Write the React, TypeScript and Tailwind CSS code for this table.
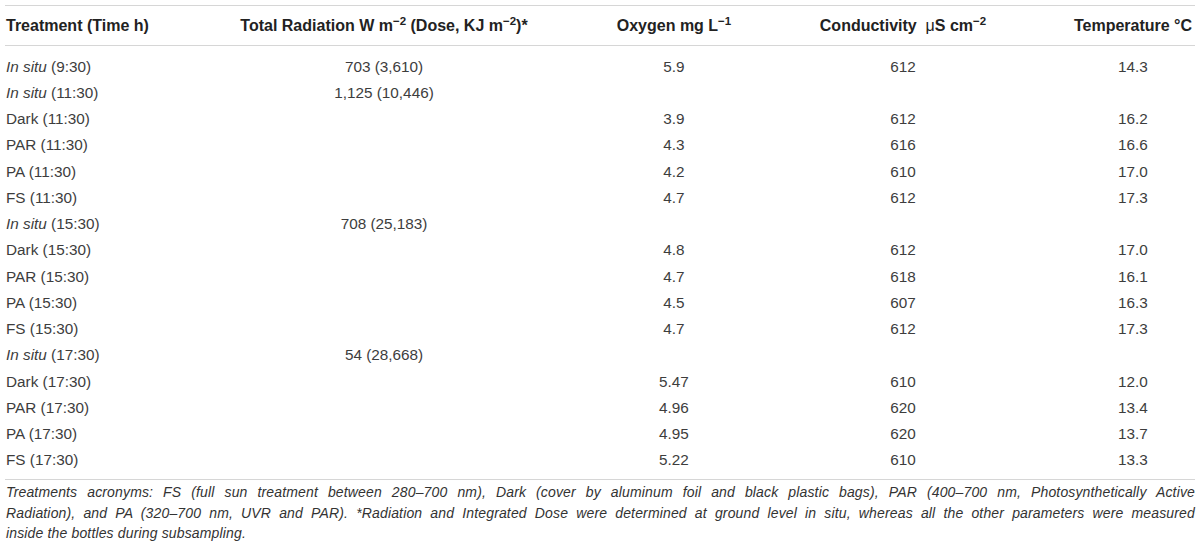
const rows: { label: string; italic?: boolean; time: string; rad?: string; o2?: string; cond?: string; temp?: string }[] = [
  { label: "In situ", italic: true, time: "(9:30)", rad: "703 (3,610)", o2: "5.9", cond: "612", temp: "14.3" },
  { label: "In situ", italic: true, time: "(11:30)", rad: "1,125 (10,446)" },
  { label: "Dark", time: "(11:30)", o2: "3.9", cond: "612", temp: "16.2" },
  { label: "PAR", time: "(11:30)", o2: "4.3", cond: "616", temp: "16.6" },
  { label: "PA", time: "(11:30)", o2: "4.2", cond: "610", temp: "17.0" },
  { label: "FS", time: "(11:30)", o2: "4.7", cond: "612", temp: "17.3" },
  { label: "In situ", italic: true, time: "(15:30)", rad: "708 (25,183)" },
  { label: "Dark", time: "(15:30)", o2: "4.8", cond: "612", temp: "17.0" },
  { label: "PAR", time: "(15:30)", o2: "4.7", cond: "618", temp: "16.1" },
  { label: "PA", time: "(15:30)", o2: "4.5", cond: "607", temp: "16.3" },
  { label: "FS", time: "(15:30)", o2: "4.7", cond: "612", temp: "17.3" },
  { label: "In situ", italic: true, time: "(17:30)", rad: "54 (28,668)" },
  { label: "Dark", time: "(17:30)", o2: "5.47", cond: "610", temp: "12.0" },
  { label: "PAR", time: "(17:30)", o2: "4.96", cond: "620", temp: "13.4" },
  { label: "PA", time: "(17:30)", o2: "4.95", cond: "620", temp: "13.7" },
  { label: "FS", time: "(17:30)", o2: "5.22", cond: "610", temp: "13.3" },
];

const cols = "grid grid-cols-[150px_458px_122px_336px_124px]";

function Sup({ children }: { children: React.ReactNode }) {
  return <sup className="text-[11.5px] -top-[6px]">{children}</sup>;
}

export default function App() {
  return (
    <div className="w-[1200px] h-[553px] bg-white px-[5px] pt-[5px] font-['Liberation_Sans',Arial,sans-serif] text-[#3d3d3d]">
      {/* header */}
      <div className={`${cols} h-[41px] items-center border-y border-[#d6d6d6] text-[16px] font-bold text-[#222]`}>
        <div className="pl-[1px] whitespace-nowrap">Treatment (Time h)</div>
        <div className="text-center whitespace-nowrap">
          Total Radiation W m<Sup>−2</Sup> (Dose, KJ m<Sup>−2</Sup>)*
        </div>
        <div className="text-center whitespace-nowrap">
          Oxygen mg L<Sup>−1</Sup>
        </div>
        <div className="text-center whitespace-nowrap">
          Conductivity&nbsp; <span className="font-normal">μ</span>S cm<Sup>−2</Sup>
        </div>
        <div className="text-center whitespace-nowrap">Temperature °C</div>
      </div>

      {/* body */}
      <div className="pt-[8px] pb-[5px] border-b border-[#d6d6d6] text-[15.3px]">
        {rows.map((r, i) => (
          <div key={i} className={`${cols} h-[26.25px] items-center`}>
            <div className="pl-[1px] whitespace-nowrap">
              {r.italic ? <i>{r.label}</i> : r.label} {r.time}
            </div>
            <div className="text-center">{r.rad}</div>
            <div className="text-center">{r.o2}</div>
            <div className="text-center">{r.cond}</div>
            <div className="text-center">{r.temp}</div>
          </div>
        ))}
      </div>

      {/* footnote */}
      <div className="pt-[2px] pl-[1px] italic text-[14px] tracking-[0.15px] leading-[20.5px] text-[#333]">
        <p className="text-justify [text-align-last:justify]">
          Treatments acronyms: FS (full sun treatment between 280–700 nm), Dark (cover by aluminum foil and black plastic bags), PAR (400–700 nm, Photosynthetically Active
        </p>
        <p className="text-justify [text-align-last:justify]">
          Radiation), and PA (320–700 nm, UVR and PAR). *Radiation and Integrated Dose were determined at ground level in situ, whereas all the other parameters were measured
        </p>
        <p>inside the bottles during subsampling.</p>
      </div>
    </div>
  );
}
